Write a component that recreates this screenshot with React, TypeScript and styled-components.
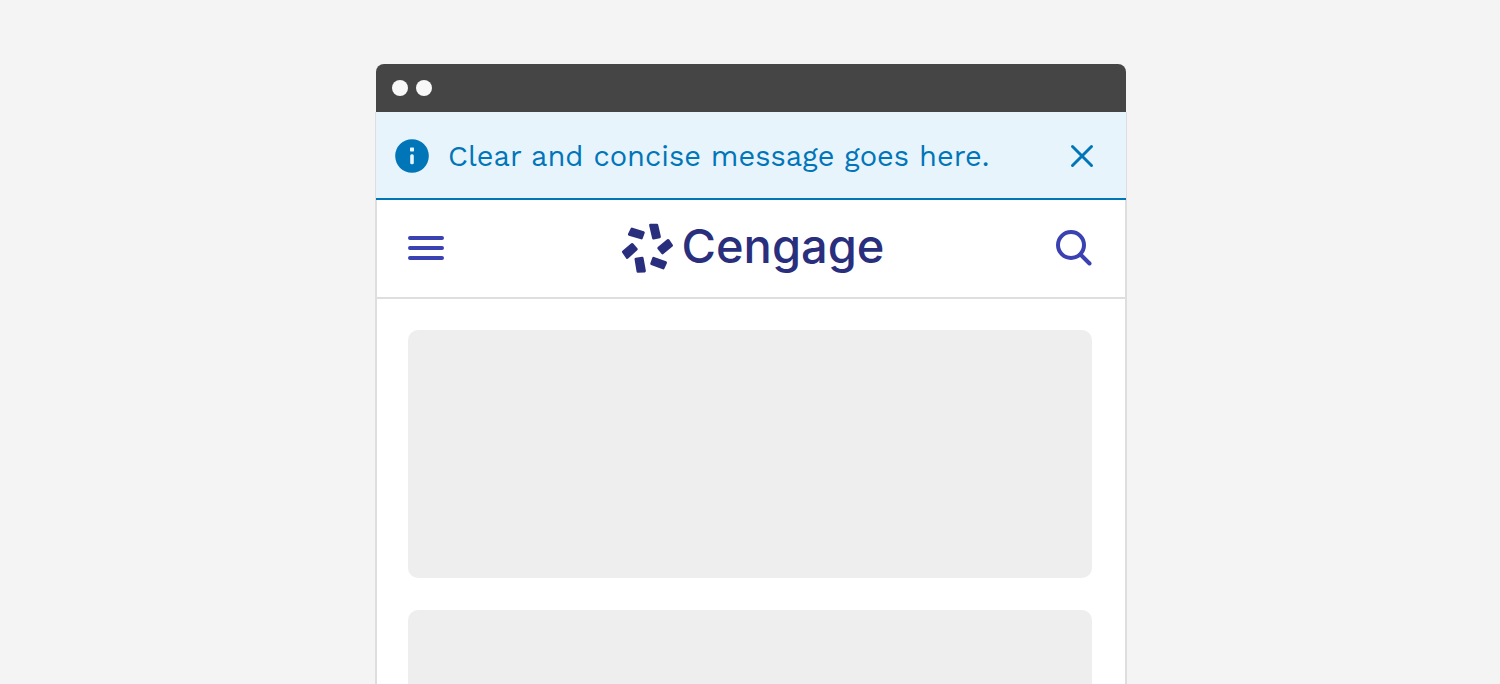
import React from "react";
import styled, { createGlobalStyle } from "styled-components";

const GlobalStyle = createGlobalStyle`
  *, *::before, *::after { box-sizing: border-box; }
  body { margin: 0; background: #f4f4f4; }
`;

const Page = styled.div`
  display: flex;
  justify-content: center;
  height: 100vh;
  overflow: hidden;
  padding: 64px 0 0 2px;
  background: #f4f4f4;
`;

const BrowserFrame = styled.div`
  display: flex;
  flex-direction: column;
  width: 100%;
  max-width: 752px;
`;

const TitleBar = styled.div`
  display: flex;
  flex: none;
  align-items: center;
  gap: 8px;
  height: 48px;
  margin: 0 1px;
  padding: 0 16px;
  border-radius: 8px 8px 0 0;
  background: #454545;
`;

const WindowDot = styled.span`
  width: 16px;
  height: 16px;
  border-radius: 50%;
  background: #f8f8f8;
`;

const Banner = styled.div`
  display: flex;
  flex: none;
  align-items: center;
  height: 88px;
  margin: 0 1px;
  padding: 2px 24px 0 16px;
  gap: 16px;
  border-bottom: 2px solid #0075b8;
  background: #e7f4fc;
  outline: 1px solid #dedede;
  clip-path: inset(0 -1px 0 -1px);
  color: #0075b8;
`;

const Message = styled.p`
  flex: 1;
  margin: 0;
  font: 400 29px/40px "Work Sans", "Open Sans", sans-serif;
  white-space: nowrap;
`;

const IconButton = styled.button`
  display: flex;
  padding: 0;
  border: 0;
  background: none;
  color: inherit;
  cursor: pointer;
`;

const Site = styled.div`
  flex: none;
  border: 2px solid #dedede;
  border-top: 0;
  background: #fff;
`;

const SiteHeader = styled.header`
  display: grid;
  grid-template-columns: 1fr auto 1fr;
  align-items: center;
  height: 99px;
  padding: 0 33px 1px 31px;
  border-bottom: 2px solid #dedede;
  color: #3a41b1;

  & > :last-child { justify-self: end; }
  & > :first-child { justify-self: start; }
`;

const Logo = styled.a`
  display: flex;
  align-items: center;
  gap: 8px;
  padding-left: 4px;
  color: #292f7c;
  text-decoration: none;
`;

const LogoText = styled.span`
  padding-bottom: 4px;
  font: 500 47px/56px Inter, sans-serif;
`;

const Content = styled.main`
  display: flex;
  flex-direction: column;
  gap: 32px;
  padding: 31px 33px 32px 31px;
`;

const Card = styled.section`
  height: 248px;
  border-radius: 10px;
  background: #eee;
`;

const LogoMark = () => (
  <svg width="54" height="52" viewBox="1 0 54 52" fill="currentColor" stroke="currentColor" strokeWidth="2.8" strokeLinejoin="round" aria-hidden="true">
    <path d="M13 7 24.4 10.6 22.4 16 10.3 12.3Z" />
    <path d="M31.5 3.2 37.9 3.2 40.5 14.9 34.5 16.1Z" />
    <path d="M49.1 18.4 52.6 23.5 43.5 30.9 39.7 26.2Z" />
    <path d="M34.6 36.3 46.6 40.6 44.2 46 32.6 41.7Z" />
    <path d="M16.9 37.1 23.2 36.2 25.5 49 18.9 49.4Z" />
    <path d="M13.2 22.4 17.3 27.2 8.2 35.5 4.4 29.9Z" />
  </svg>
);

const App: React.FC = () => (
  <>
    <GlobalStyle />
    <Page>
      <BrowserFrame>
        <TitleBar>
          <WindowDot />
          <WindowDot />
        </TitleBar>
        <Banner role="status">
          <svg width="40" height="40" viewBox="0 0 40 40" aria-hidden="true">
            <circle cx="20" cy="20" r="16.8" fill="#0075b8" />
            <rect x="18" y="11.5" width="4" height="4" rx="0.7" fill="#e7f4fc" />
            <rect x="18.2" y="18.3" width="3.6" height="10" rx="1.5" fill="#e7f4fc" />
          </svg>
          <Message>Clear and concise message goes here.</Message>
          <IconButton type="button" aria-label="Dismiss message">
            <svg width="40" height="40" viewBox="0 0 40 40" fill="none" stroke="currentColor" strokeWidth="3" strokeLinecap="round">
              <path d="M10.5 10.5 29.5 29.5M29.5 10.5 10.5 29.5" />
            </svg>
          </IconButton>
        </Banner>
        <Site>
          <SiteHeader>
            <IconButton type="button" aria-label="Open menu">
              <svg width="36" height="36" viewBox="0 0 36 36" fill="none" stroke="currentColor" strokeWidth="4" strokeLinecap="round">
                <path d="M2 8H34M2 18H34M2 28H34" />
              </svg>
            </IconButton>
            <Logo href="#">
              <LogoMark />
              <LogoText>Cengage</LogoText>
            </Logo>
            <IconButton type="button" aria-label="Search">
              <svg width="36" height="36" viewBox="0 0 36 36" fill="none" stroke="currentColor" strokeWidth="4" strokeLinecap="round">
                <circle cx="15" cy="15" r="13" />
                <path d="M25 25 33.5 33.5" />
              </svg>
            </IconButton>
          </SiteHeader>
          <Content>
            <Card />
            <Card />
          </Content>
        </Site>
      </BrowserFrame>
    </Page>
  </>
);

export default App;
